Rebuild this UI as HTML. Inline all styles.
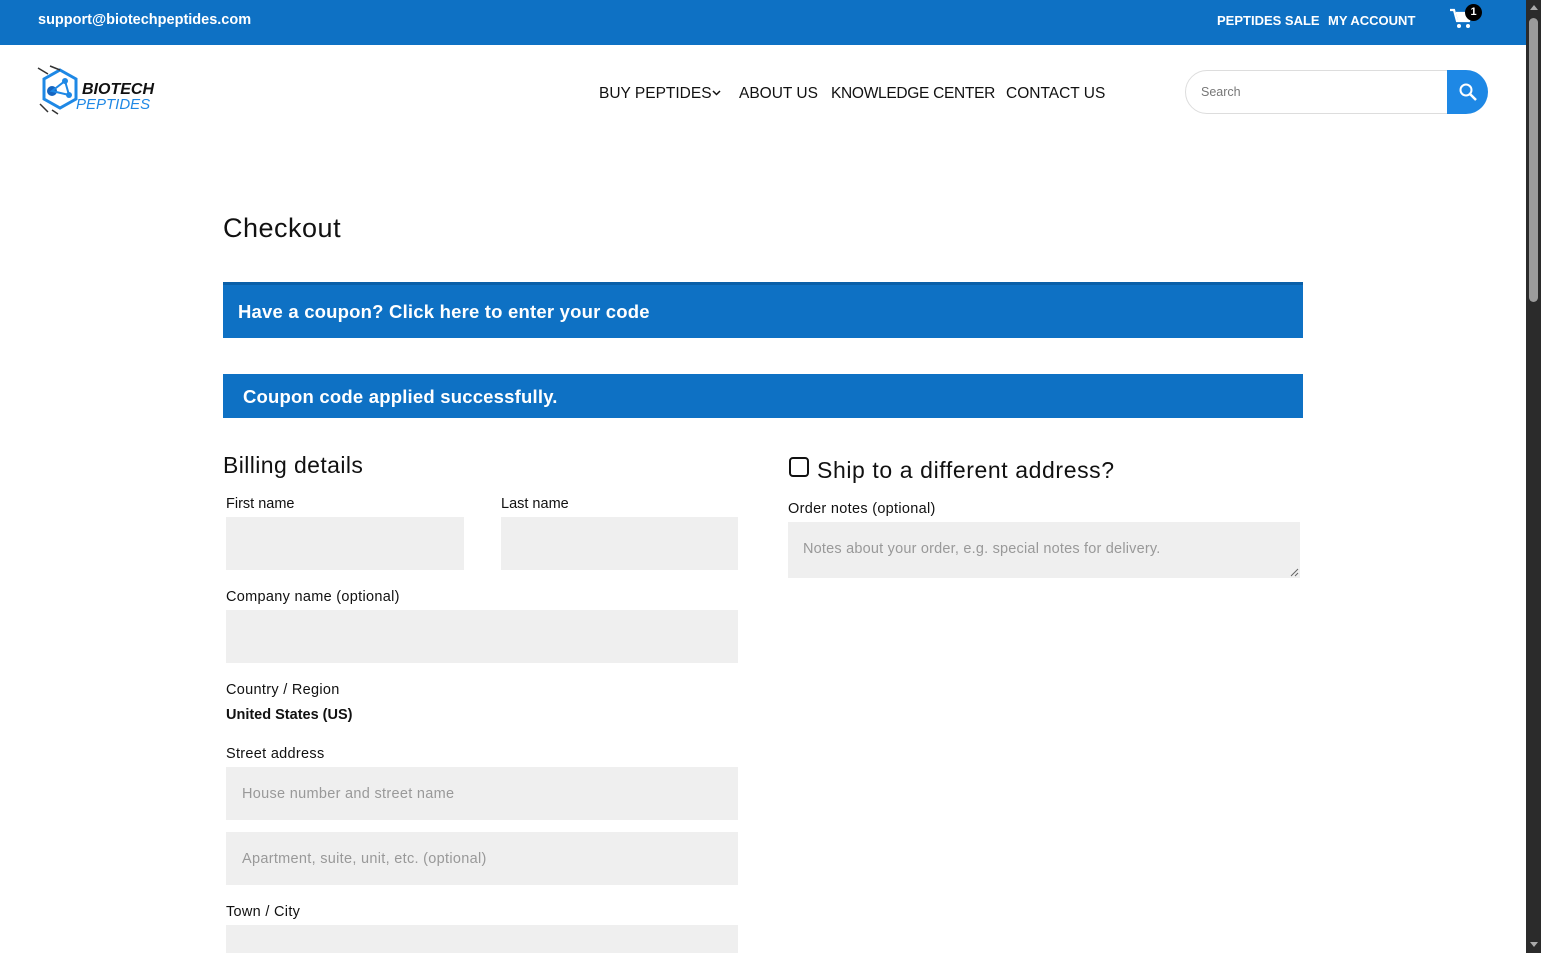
<!DOCTYPE html>
<html style="width:1541px;height:953px;overflow:hidden"><head><meta charset="utf-8"><style>
*{margin:0;padding:0;box-sizing:border-box}
body{width:1541px;height:953px;overflow:hidden;background:#fff;font-family:"Liberation Sans",Arial,sans-serif;color:#111;position:relative}
.a{position:absolute;white-space:nowrap}
.top{left:0;top:0;width:1526px;height:45px;background:#0e71c4}
.tb{color:#fff;font-weight:bold;font-size:14px}
.nav{font-size:15.5px;color:#111;top:85px}
.blue{background:#0e71c4;color:#fff;font-weight:bold}
.lbl{font-size:14.5px;color:#111}
.in{background:#efefef}
.ph{font-size:14.5px;color:#999}
</style></head><body>
<div class="a top"></div>
<div class="a tb" style="left:38px;top:12px;font-size:14.5px">support@biotechpeptides.com</div>
<div class="a tb" style="left:1217px;top:13px;font-size:13px">PEPTIDES SALE</div>
<div class="a tb" style="left:1328px;top:13px;font-size:13px">MY ACCOUNT</div>
<svg class="a" style="left:1449px;top:8px" width="26" height="22" viewBox="0 0 26 22"><path d="M1 2h4l3 11h12l3-8H7" fill="none" stroke="#fff" stroke-width="2.2"/><path d="M7 5h16l-3 8H9z" fill="#fff"/><circle cx="10" cy="18" r="2" fill="#fff"/><circle cx="19" cy="18" r="2" fill="#fff"/></svg>
<div class="a" style="left:1465px;top:4px;width:17px;height:17px;border-radius:50%;background:#000;color:#fff;font-size:11px;font-weight:bold;text-align:center;line-height:17px">1</div>
<div class="a" style="left:1526px;top:0;width:15px;height:953px;background:#2b2b2b"></div>
<div class="a" style="left:1529px;top:18px;width:9px;height:284px;background:#9b9b9b;border-radius:5px"></div>
<div class="a" style="left:1530px;top:5px;width:0;height:0;border-left:4px solid transparent;border-right:4px solid transparent;border-bottom:5px solid #aaa"></div>
<div class="a" style="left:1530px;top:942px;width:0;height:0;border-left:4px solid transparent;border-right:4px solid transparent;border-top:5px solid #aaa"></div>
<svg class="a" style="left:36px;top:64px" width="50" height="52" viewBox="0 0 50 52"><polygon points="24,6 40,15 40,35 24,44 8,35 8,15" fill="none" stroke="#1e88e5" stroke-width="3"/><path d="M2 4l10 6M14 2l10 4M4 40l8 8M16 46l6 4" stroke="#333" stroke-width="1.5"/><circle cx="16" cy="27" r="5" fill="#1565c0"/><circle cx="29" cy="17" r="3" fill="#1e88e5"/><circle cx="33" cy="31" r="3" fill="#1e88e5"/><path d="M16 27L29 17L33 31Z" fill="none" stroke="#1e88e5" stroke-width="2"/></svg>
<div class="a" style="left:82px;top:81px;font-size:16px;font-weight:bold;font-style:italic;color:#111">BIOTECH</div>
<div class="a" style="left:76px;top:96px;font-size:15px;font-style:italic;color:#1e88e5">PEPTIDES</div>
<div class="a nav" style="left:599px">BUY PEPTIDES</div>
<svg class="a" style="left:712px;top:90px" width="9" height="6"><path d="M1 1l3.5 3.5L8 1" fill="none" stroke="#111" stroke-width="1.5"/></svg>
<div class="a nav" style="left:739px">ABOUT US</div>
<div class="a nav" style="left:831px;letter-spacing:-0.3px">KNOWLEDGE CENTER</div>
<div class="a nav" style="left:1006px">CONTACT US</div>
<div class="a" style="left:1185px;top:70px;width:270px;height:44px;border:1px solid #ddd;border-radius:22px 0 0 22px"></div>
<div class="a" style="left:1201px;top:85px;font-size:12.5px;color:#777">Search</div>
<div class="a" style="left:1447px;top:70px;width:41px;height:44px;background:#1e88e5;border-radius:0 22px 22px 0"></div>
<svg class="a" style="left:1458px;top:82px" width="20" height="20" viewBox="0 0 20 20"><circle cx="8" cy="8" r="5.5" fill="none" stroke="#fff" stroke-width="2"/><path d="M12 12l6 6" stroke="#fff" stroke-width="2.5"/></svg>
<div class="a" style="left:223px;top:213px;font-size:27px;color:#111;letter-spacing:0.5px">Checkout</div>
<div class="a blue" style="left:223px;top:282px;width:1080px;height:56px;border-top:3px solid #0a5fa8"></div>
<div class="a" style="left:238px;top:301px;font-size:18.5px;color:#fff;font-weight:bold;letter-spacing:0.2px">Have a coupon? Click here to enter your code</div>
<div class="a blue" style="left:223px;top:374px;width:1080px;height:44px"></div>
<div class="a" style="left:243px;top:386px;font-size:18.5px;color:#fff;font-weight:bold;letter-spacing:0.2px">Coupon code applied successfully.</div>
<div class="a" style="left:223px;top:452px;font-size:23px;letter-spacing:0.4px">Billing details</div>
<div class="a lbl" style="left:226px;top:496px">First name</div>
<div class="a lbl" style="left:501px;top:496px">Last name</div>
<div class="a in" style="left:226px;top:517px;width:238px;height:53px"></div>
<div class="a in" style="left:501px;top:517px;width:237px;height:53px"></div>
<div class="a lbl" style="left:226px;top:589px;letter-spacing:0.3px">Company name (optional)</div>
<div class="a in" style="left:226px;top:610px;width:512px;height:53px"></div>
<div class="a lbl" style="left:226px;top:682px;letter-spacing:0.3px">Country / Region</div>
<div class="a lbl" style="left:226px;top:707px;font-weight:bold">United States (US)</div>
<div class="a lbl" style="left:226px;top:746px;letter-spacing:0.3px">Street address</div>
<div class="a in" style="left:226px;top:767px;width:512px;height:53px"></div>
<div class="a ph" style="left:242px;top:786px;letter-spacing:0.3px">House number and street name</div>
<div class="a in" style="left:226px;top:832px;width:512px;height:53px"></div>
<div class="a ph" style="left:242px;top:851px;letter-spacing:0.3px">Apartment, suite, unit, etc. (optional)</div>
<div class="a lbl" style="left:226px;top:904px;letter-spacing:0.3px">Town / City</div>
<div class="a in" style="left:226px;top:925px;width:512px;height:28px"></div>
<div class="a" style="left:789px;top:457px;width:20px;height:20px;border:2px solid #111;border-radius:4px"></div>
<div class="a" style="left:817px;top:457px;font-size:23px;letter-spacing:0.6px">Ship to a different address?</div>
<div class="a lbl" style="left:788px;top:501px;letter-spacing:0.3px">Order notes (optional)</div>
<div class="a in" style="left:788px;top:522px;width:512px;height:56px"></div>
<div class="a ph" style="left:803px;top:541px;letter-spacing:0.2px">Notes about your order, e.g. special notes for delivery.</div>
<svg class="a" style="left:1290px;top:568px" width="9" height="9"><path d="M1 8L8 1M5 8L8 5" stroke="#666" stroke-width="1"/></svg>
</body></html>
